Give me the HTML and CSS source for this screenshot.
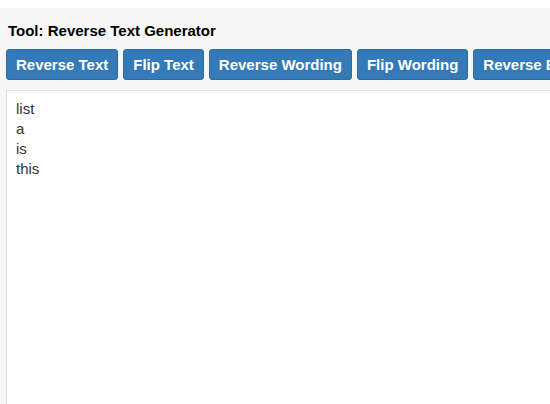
FILE: index.html
```html
<!DOCTYPE html>
<html>
<head>
    <meta charset="UTF-8">
    <meta name="viewport" content="width=device-width, initial-scale=1.0">
    <title>Reverse Text Generator</title>
    <link rel="stylesheet" href="styles.css">
</head>
<body>
    <div class="tool">
        <h1 class="tool__title">Tool: Reverse Text Generator</h1>
        <div class="tool__buttons">
            <button class="btn">Reverse Text</button>
            <button class="btn">Flip Text</button>
            <button class="btn">Reverse Wording</button>
            <button class="btn">Flip Wording</button>
            <button class="btn">Reverse Each Word</button>
        </div>
        <textarea class="tool__text">list
a
is
this</textarea>
    </div>
</body>
</html>
```

FILE: styles.css
```css
*, *::before, *::after {
    box-sizing: border-box;
    font-family: 'Liberation Sans', Arial, sans-serif;
}
html, body {
    margin: 0;
    height: 100%;
    overflow: hidden;
    background-color: #fff;
}
.tool {
    margin-top: 8px;
    background-color: #f7f7f7;
    padding: 14px 0 0 6px;
    height: 500px;
}
.tool__title {
    margin: 0 0 0 2px;
    font-size: 15px;
    font-weight: bold;
    line-height: 17px;
    color: #000;
}
.tool__buttons {
    display: flex;
    gap: 5px;
    margin-top: 10px;
    white-space: nowrap;
}
.btn {
    flex: none;
    height: 31px;
    padding: 0 9px;
    border: 1px solid #2e6da4;
    border-radius: 3px;
    background-color: #337ab7;
    color: #fff;
    font-size: 15px;
    font-weight: bold;
}
.tool__text {
    display: block;
    margin-top: 10px;
    width: 600px;
    height: 400px;
    padding: 8px 9px;
    border: 1px solid #e3e3e3;
    background-color: #fff;
    font-size: 15px;
    line-height: 20px;
    color: #333;
    resize: none;
    outline: none;
}
```
